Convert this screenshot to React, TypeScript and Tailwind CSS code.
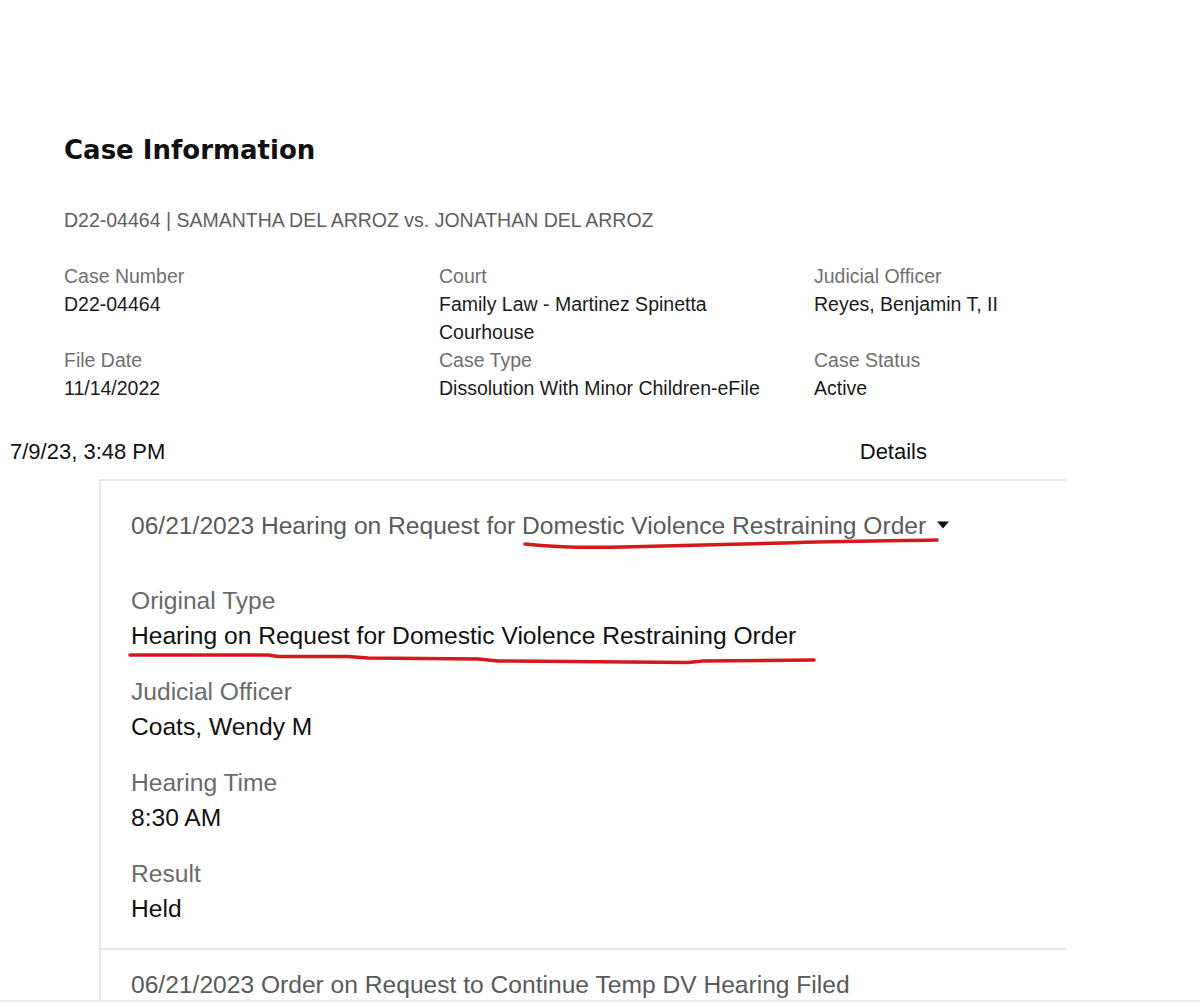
import React from 'react';

const sans = { fontFamily: '"Liberation Sans", Arial, sans-serif' };

interface FieldProps {
    label: string;
    value: React.ReactNode;
}

function InfoField({ label, value }: FieldProps) {
    return (
        <div className="leading-[28px]">
            <div className="text-[#707070]">{label}</div>
            <div className="text-[#1b1b1b]">{value}</div>
        </div>
    );
}

function DetailField({ label, value, children }: FieldProps & { children?: React.ReactNode }) {
    return (
        <div className="relative mb-[21px] last:mb-0">
            <div className="leading-[35px] text-[#6a6a6a]">{label}</div>
            <div className="relative leading-[35px] text-[#111]">
                {value}
                {children}
            </div>
        </div>
    );
}

export default function App() {
    return (
        <div className="h-[1003px] w-[1200px] overflow-hidden bg-white" style={sans}>
            {/* case summary */}
            <div className="pl-[64px] pt-[134px]">
                <h1
                    className="text-[26px] font-bold leading-[32px] text-[#111]"
                    style={{ fontFamily: '"DejaVu Sans", Verdana, sans-serif' }}
                >
                    Case Information
                </h1>
                <p className="mt-[40px] text-[19.5px] leading-[28px] text-[#5f5f5f]">
                    D22-04464 | SAMANTHA DEL ARROZ vs. JONATHAN DEL ARROZ
                </p>
                <div className="mt-[28px] grid grid-cols-[340px_340px_340px] gap-x-[35px] text-[19.5px]">
                    <InfoField label="Case Number" value="D22-04464" />
                    <InfoField label="Court" value="Family Law - Martinez Spinetta Courhouse" />
                    <InfoField label="Judicial Officer" value="Reyes, Benjamin T, II" />
                    <InfoField label="File Date" value="11/14/2022" />
                    <InfoField label="Case Type" value="Dissolution With Minor Children-eFile" />
                    <InfoField label="Case Status" value="Active" />
                </div>
            </div>

            {/* print header */}
            <div className="mt-[37px] flex items-center text-[22px] leading-[26px] text-[#111]">
                <span className="pl-[10px]">7/9/23, 3:48 PM</span>
                <span className="ml-auto mr-[273px]">Details</span>
            </div>

            {/* event card */}
            <div className="ml-[99px] mt-[14px] h-[521px] w-[967px] border-l-2 border-t-2 border-[#e6e6e6]">
                <div className="border-b-2 border-[#e6e6e6] pb-[22px] pl-[30px] pt-[29px] text-[24.6px]">
                    <div className="relative flex items-center leading-[32px] text-[#5a5a5a]">
                        <span>06/21/2023 Hearing on Request for Domestic Violence Restraining Order</span>
                        <svg width="12" height="8" viewBox="0 0 12 8" className="ml-[11px] mt-[-3px]">
                            <path d="M0 0.5 L12 0.5 L6 7.5 Z" fill="#111" />
                        </svg>
                        <svg
                            width="416"
                            height="14"
                            viewBox="0 0 416 14"
                            className="absolute left-[392px] top-[27px]"
                        >
                            <path
                                d="M2 7 C 20 9, 60 11, 100 10 S 200 8, 260 6 S 360 4, 414 3"
                                stroke="#d3191c"
                                strokeWidth="3.5"
                                strokeLinecap="round"
                                fill="none"
                            />
                        </svg>
                    </div>

                    <div className="mt-[41px]">
                        <DetailField
                            label="Original Type"
                            value="Hearing on Request for Domestic Violence Restraining Order"
                        >
                            <svg
                                width="688"
                                height="18"
                                viewBox="0 0 688 18"
                                className="absolute left-[-3px] top-[32px]"
                            >
                                <path
                                    d="M2 5 L140 5 L150 6.5 L220 6.5 L240 8 L350 9 L370 11 L560 12.5 L575 11 L686 10"
                                    stroke="#d3191c"
                                    strokeWidth="3.5"
                                    strokeLinecap="round"
                                    strokeLinejoin="round"
                                    fill="none"
                                />
                            </svg>
                        </DetailField>
                        <DetailField label="Judicial Officer" value="Coats, Wendy M" />
                        <DetailField label="Hearing Time" value="8:30 AM" />
                        <DetailField label="Result" value="Held" />
                    </div>
                </div>
                <div className="pl-[30px] pt-[20px] text-[24.6px] leading-[30px] text-[#5a5a5a]">
                    06/21/2023 Order on Request to Continue Temp DV Hearing Filed
                </div>
            </div>
            <div className="border-t-2 border-[#ececec]" />
        </div>
    );
}
